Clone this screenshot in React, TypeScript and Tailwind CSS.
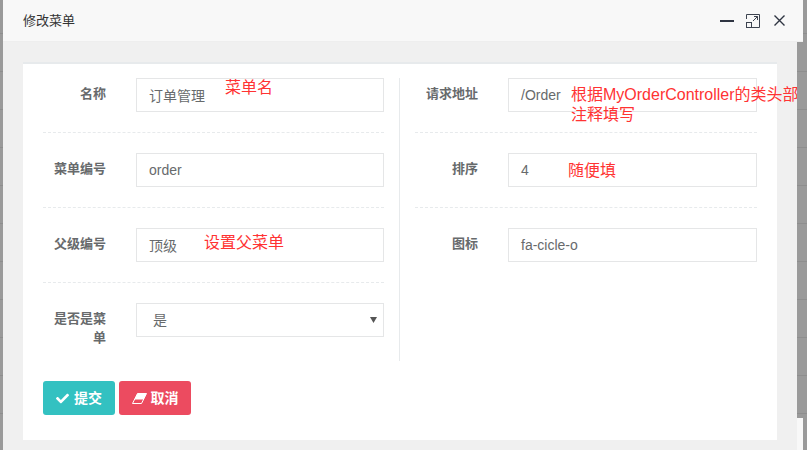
import { FaCheck } from "react-icons/fa"

const inputCls = "flex h-[34px] items-center border border-[#e5e6e7] bg-white pl-[12px] text-[14px] text-[#676a6c]"

const Field = ({ label, value, inputWidth = "w-[248px]", cjk }: { label: string; value: string; inputWidth?: string; cjk?: boolean }) => (
  <div className="flex items-start">
    <label className="w-[93px] shrink-0 pr-[30px] pt-[6px] text-right text-[13px] font-bold leading-[19px] text-[#676a6c]">{label}</label>
    <div className={`${inputCls} ${inputWidth}`}>{cjk ? <span className="pt-[2px]">{value}</span> : value}</div>
  </div>
)

const Divider = () => <div className="my-[20px] border-t border-dashed border-[#e7eaec]" />

const Note = ({ children, className }: { children: React.ReactNode; className: string }) => (
  <span className={`absolute whitespace-nowrap text-[16px] text-[#ff3333] ${className}`}>{children}</span>
)

export default function App() {
  return (
    <div className="relative h-[450px] w-[807px] overflow-hidden bg-[repeating-linear-gradient(to_bottom,#9a9a9a_0,#9a9a9a_33px,#8e8e8e_33px,#8e8e8e_34px,#9a9a9a_34px,#9a9a9a_38px)] font-['Liberation_Sans','Noto_Sans_CJK_SC',sans-serif]">
      <div className="ml-[3px] w-[800px]">
        <div className="flex h-[42px] items-center justify-between border-b border-[#eeeeee] bg-[#f8f8f8] pl-[20px] pr-[18px] text-[13px] text-[#333333]">
          <span>修改菜单</span>
          <div className="flex items-center">
            <svg width="14" height="14" viewBox="0 0 14 14"><path d="M0 7h14" stroke="#2f3542" strokeWidth="2" /></svg>
            <svg className="ml-[12px]" width="14" height="14" viewBox="0 0 14 14" fill="none" stroke="#3d4450" strokeWidth="1"><path d="M.5 5V.5h13v13H6M7 7l4.5-4.5M8 2.5h3.500V6" /><rect x=".5" y="8.500" width="5" height="5" /></svg>
            <svg className="ml-[14px]" width="11" height="11" viewBox="0 0 11 11" fill="none" stroke="#2f3542" strokeWidth="1.4"><path d="M.5.5l10 10M10.500.5l-10 10" /></svg>
          </div>
        </div>
        <div className="h-[408px] w-[794px] bg-[#f0f0f0] px-[20px] pt-[20px]">
          <div className="h-[378px] border-t-2 border-[#e7eaec] bg-white px-[20px] pt-[14px]">
            <div className="flex">
              <div className="w-[341px]">
                <Field label="名称" value="订单管理" cjk />
                <Divider />
                <Field label="菜单编号" value="order" />
                <Divider />
                <Field label="父级编号" value="顶级" cjk />
                <Divider />
                <div className="flex items-start">
                  <label className="w-[93px] shrink-0 pr-[30px] pt-[6px] text-right text-[13px] font-bold leading-[19px] text-[#676a6c]">是否是菜单</label>
                  <div className={`${inputCls} relative w-[248px] pl-[16px]`}>
                    <span className="pt-[1px]">是</span>
                    <svg className="absolute right-[6px] top-[13px]" width="7" height="6" viewBox="0 0 7 6"><path d="M0 0h7L3.500 6z" fill="#555555" /></svg>
                  </div>
                </div>
              </div>
              <div className="mx-[15px] h-[283px] border-l border-[#e7eaec]" />
              <div className="w-[342px]">
                <Field label="请求地址" value="/Order" inputWidth="w-[249px]" />
                <Divider />
                <Field label="排序" value="4" inputWidth="w-[249px]" />
                <Divider />
                <Field label="图标" value="fa-cicle-o" inputWidth="w-[249px]" />
              </div>
            </div>
            <div className="mt-[20px] flex gap-[4px]">
              <button className="flex h-[34px] w-[72px] items-center justify-center gap-[5px] rounded-[3px] bg-[#33c1c1] text-[14px] font-bold text-white"><FaCheck size={13} />提交</button>
              <button className="flex h-[34px] w-[72px] items-center justify-center gap-[4px] rounded-[3px] bg-[#ec4b60] text-[14px] font-bold text-white">
                <svg width="15" height="11" viewBox="0 0 15 11"><path d="M5.500.5h9L9.500 10.500H.5z" fill="none" stroke="#ffffff" /><path d="M5.500.5h9L11.500 6.500h-9z" fill="#ffffff" /></svg>
                取消
              </button>
            </div>
          </div>
        </div>
      </div>
      <div className="absolute left-[797px] top-[418px] h-[32px] w-[6px] bg-[#f8f8f8]" />
      <Note className="left-[225px] top-[77px] leading-[22px]">菜单名</Note>
      <Note className="left-[571px] top-[85px] w-[226px] overflow-hidden leading-[20px]">根据MyOrderController的类头部<br />注释填写</Note>
      <Note className="left-[568px] top-[160px] leading-[22px]">随便填</Note>
      <Note className="left-[204px] top-[232px] leading-[22px]">设置父菜单</Note>
    </div>
  )
}
